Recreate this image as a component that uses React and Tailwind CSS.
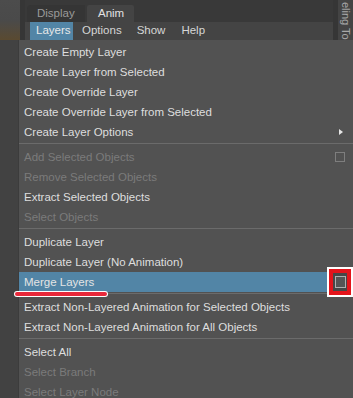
import React from 'react';

const Sep = () => (
  <div className="h-[5px] pt-px">
    <div className="h-px bg-[#6b6b6b]" />
  </div>
);

const Item = ({ label, disabled, active, arrow, box }) => (
  <div
    className={`h-[20px] flex items-center justify-between pl-[5px] ${active ? 'bg-[#5285a6] text-[#e4e4e4]' : ''} ${disabled ? 'text-[#7b7b7b]' : active ? '' : 'text-[#dedede]'}`}
  >
    <span className="whitespace-nowrap pt-[2px]">{label}</span>
    {arrow && (
      <span className="mr-[10px] w-0 h-0 border-y-[3px] border-y-transparent border-l-[4px] border-l-[#e6e6e6]" />
    )}
    {box && (
      <span className="mr-[8px] w-[10px] h-[10px] border border-[#7e7e7e]" />
    )}
    {active && (
      <span className="mr-[5px] w-[15px] h-[19px] bg-[#474747] flex items-center justify-center">
        <span className="w-[11px] h-[12px] border border-[#b0b0b0] bg-[#555]" />
      </span>
    )}
  </div>
);

export default function App() {
  return (
    <div className="relative w-[353px] h-[398px] overflow-hidden bg-[#444] text-[11.5px] font-['Liberation_Sans',sans-serif]">
      <div className="flex h-[40px]">
        <div className="w-[20px] bg-gradient-to-b from-[#4c4c4c] via-[#4a4a4a] to-[#5a4a30]" />
        <div className="w-[5px] bg-[#363636]" />
        <div className="flex-1 flex flex-col">
          <div className="h-[22px] bg-[#393939] flex items-end pl-[2px] gap-[2px]">
            <div className="w-[58px] h-[17px] rounded-tl-[4px] bg-[#353535] text-[#9a9a9a] pl-[10px] flex items-center">Display</div>
            <div className="w-[47px] h-[17px] rounded-t-[2px] bg-[#444] text-[#e2e2e2] pl-[11px] flex items-center">Anim</div>
          </div>
          <div className="h-[18px] bg-[#444] flex items-stretch pl-[5px] text-[#d6d6d6]">
            <div className="w-[43px] bg-[#5285a6] text-[#e8e8e8] pl-[6px] flex items-center">Layers</div>
            <div className="pl-[9px] flex items-center">Options</div>
            <div className="pl-[15px] flex items-center">Show</div>
            <div className="pl-[16px] flex items-center">Help</div>
          </div>
        </div>
        <div className="w-[5px] bg-[#363636]" />
        <div className="w-[15px] bg-[#444] overflow-hidden text-[#a8a8a8] text-[11px] pl-[1px] pt-[2px]">
          <div className="[writing-mode:vertical-rl] whitespace-nowrap leading-[13px]">eling To</div>
        </div>
      </div>
      <div className="flex">
        <div className="w-[19px] h-[358px] bg-[#424242] border-r border-[#3c3c3c]" />
        <div className="flex-1 bg-[#525252] pt-[2px] h-[358px]">
          <Item label="Create Empty Layer" />
          <Item label="Create Layer from Selected" />
          <Item label="Create Override Layer" />
          <Item label="Create Override Layer from Selected" />
          <Item label="Create Layer Options" arrow />
          <Sep />
          <Item label="Add Selected Objects" disabled box />
          <Item label="Remove Selected Objects" disabled />
          <Item label="Extract Selected Objects" />
          <Item label="Select Objects" disabled />
          <Sep />
          <Item label="Duplicate Layer" />
          <Item label="Duplicate Layer (No Animation)" />
          <Item label="Merge Layers" active />
          <Sep />
          <Item label="Extract Non-Layered Animation for Selected Objects" />
          <Item label="Extract Non-Layered Animation for All Objects" />
          <Sep />
          <Item label="Select All" />
          <Item label="Select Branch" disabled />
          <Item label="Select Layer Node" disabled />
        </div>
      </div>
      <div className="absolute left-[327px] top-[267px] w-[26px] h-[30px] border-2 border-white">
        <div className="w-full h-full border-[4px] border-[#e3141b]" />
      </div>
      <div className="absolute left-[14px] top-[291px] w-[94px] h-[6px] rounded-[3px] bg-white p-px">
        <div className="w-full h-full rounded-[2px] bg-[#e8283a]" />
      </div>
    </div>
  );
}
